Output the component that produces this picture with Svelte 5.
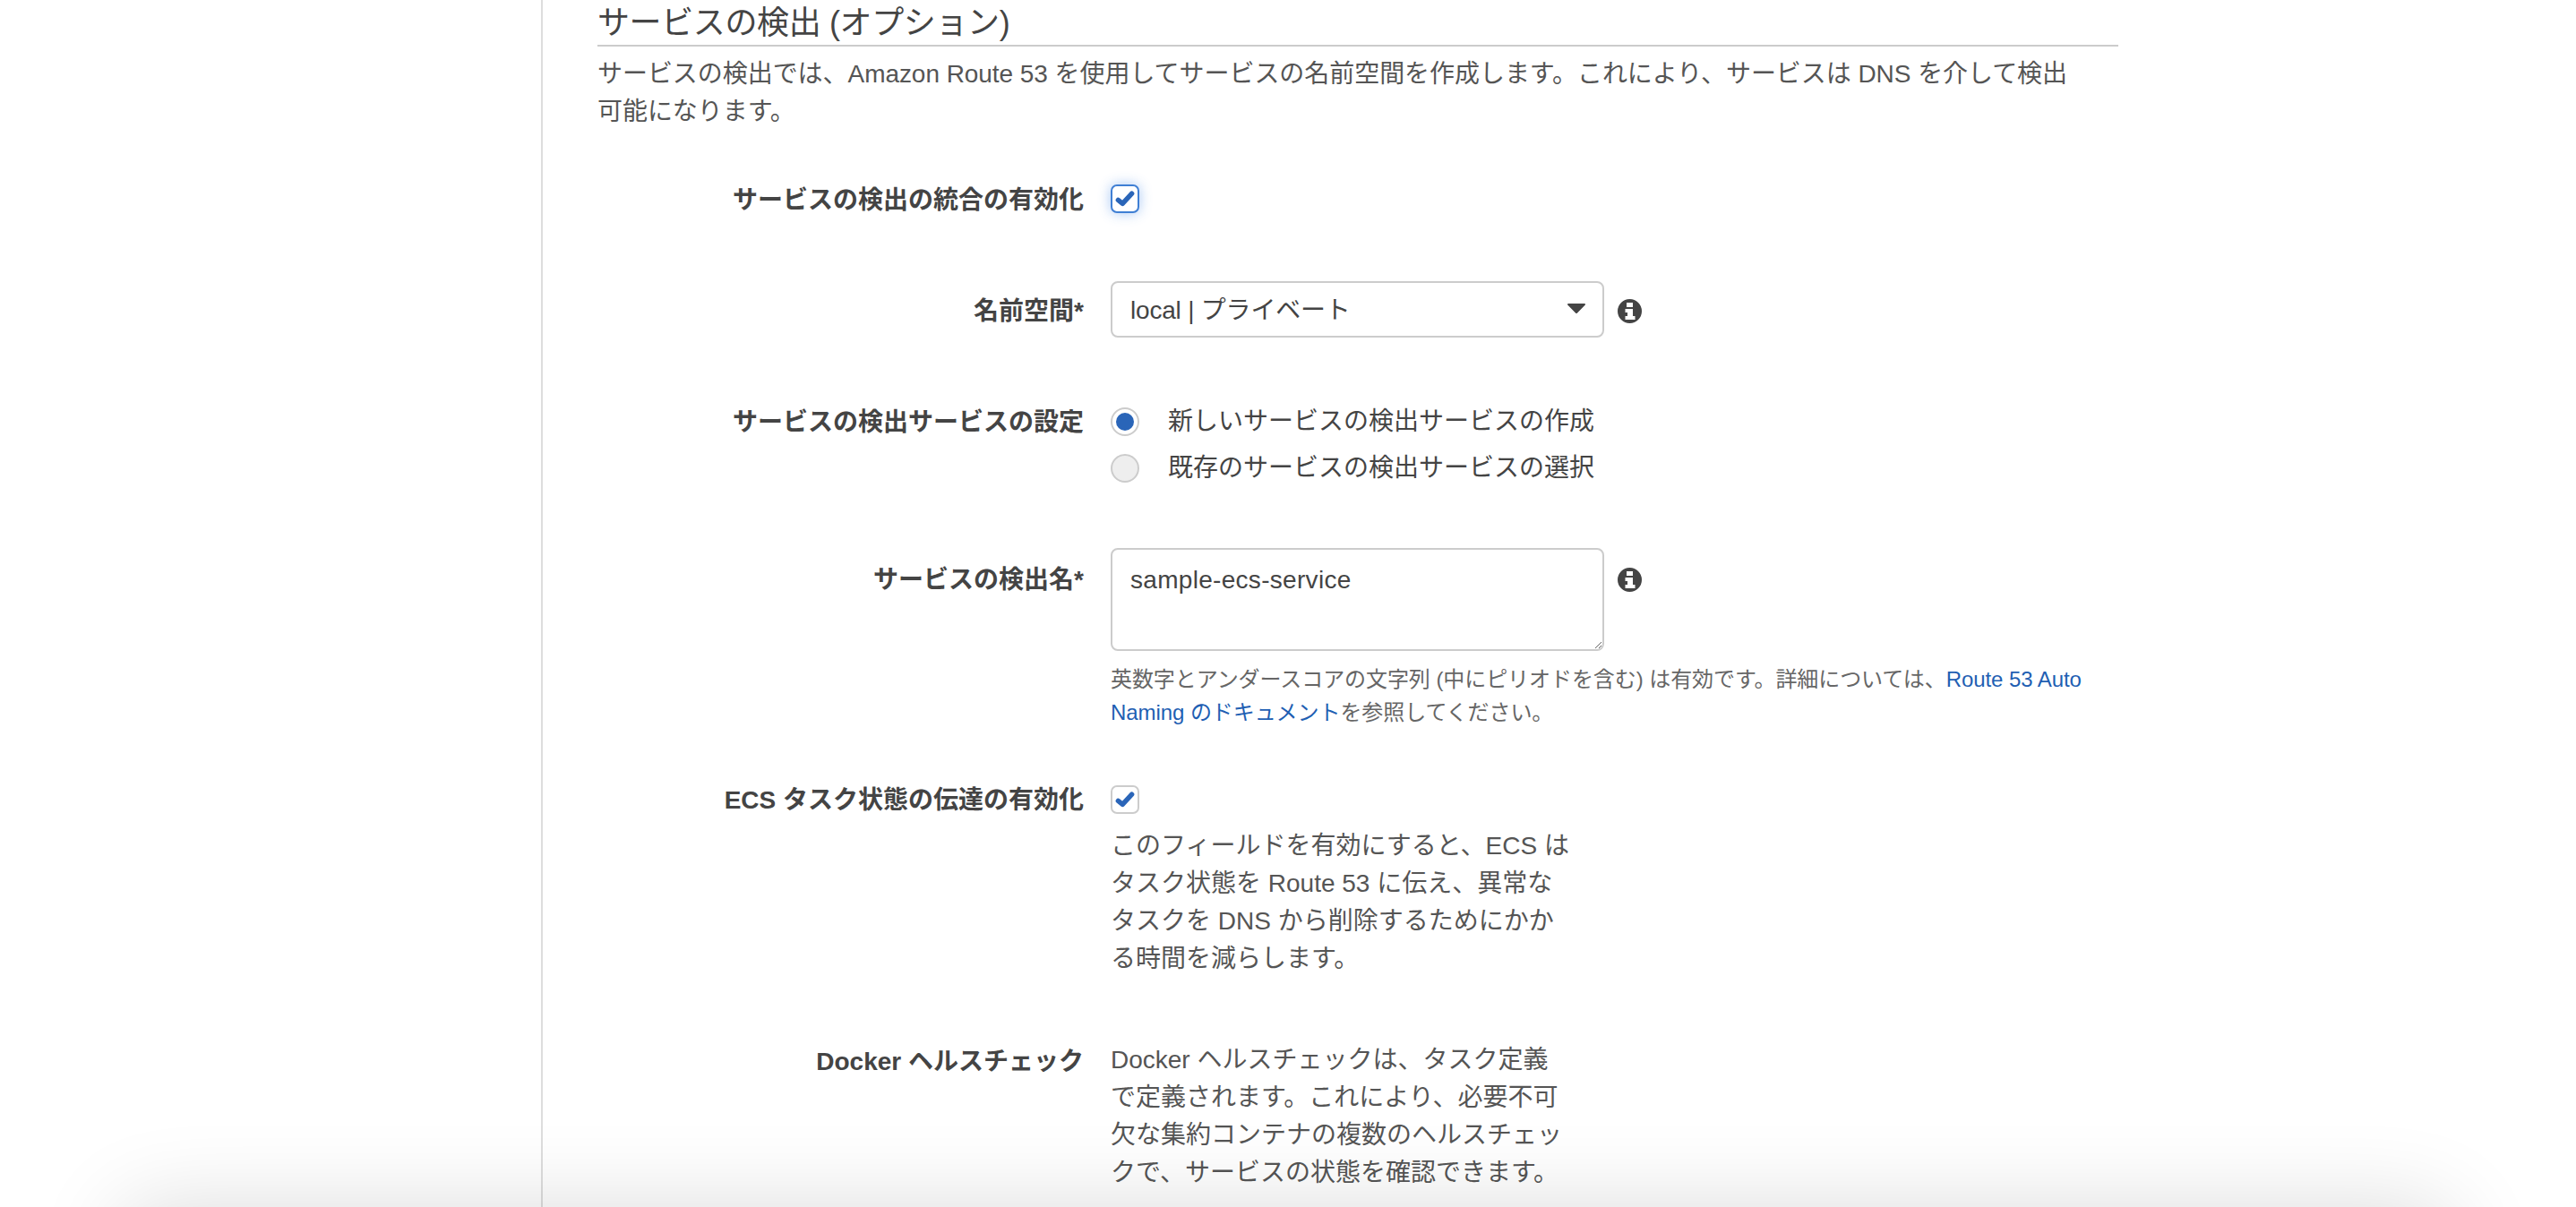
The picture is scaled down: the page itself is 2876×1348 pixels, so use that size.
<script>
  const infoPath = "M13.5 0a13.5 13.5 0 1 0 0 27a13.5 13.5 0 1 0 0-27z M10 4h7v5h-7z M8.500 11h8.500v8h2.500v4h-11v-4h2.500v-4h-2.500z";
  const checkPath = "M3.500 11.500L9 16L20.500 3.500";
</script>

<main class="page">
  <section class="content">
    <h2 class="heading">サービスの検出 (オプション)</h2>
    <p class="desc">サービスの検出では、Amazon Route 53 を使用してサービスの名前空間を作成します。これにより、サービスは DNS を介して検出<br>可能になります。</p>

    <div class="row r1">
      <div class="label">サービスの検出の統合の有効化</div>
      <div class="control">
        <span class="check focus">
          <svg viewBox="0 0 24 20" width="22" height="18"><path d={checkPath} fill="none" stroke="#2a65b8" stroke-width="6" stroke-linecap="round" stroke-linejoin="round"/></svg>
        </span>
      </div>
    </div>

    <div class="row r2">
      <div class="label pad12">名前空間*</div>
      <div class="control">
        <div class="select">
          <span>local | プライベート</span>
          <svg class="arrow" viewBox="0 0 20 11" width="20" height="11"><path d="M1 0h18a1 1 0 0 1 .8 1.600l-8.800 9a1.400 1.400 0 0 1-2 0L.2 1.600A1 1 0 0 1 1 0z" fill="#444"/></svg>
        </div>
      </div>
      <svg class="info" viewBox="0 0 27 27" width="27" height="27"><path d={infoPath} fill="#444" fill-rule="evenodd"/></svg>
    </div>

    <div class="row r3">
      <div class="label">サービスの検出サービスの設定</div>
      <div class="control radios">
        <div class="option"><span class="radio on"><i></i></span>新しいサービスの検出サービスの作成</div>
        <div class="option"><span class="radio"></span>既存のサービスの検出サービスの選択</div>
      </div>
    </div>

    <div class="row r4">
      <div class="label pad14">サービスの検出名*</div>
      <div class="control wide">
        <textarea class="area" readonly>sample-ecs-service</textarea>
        <p class="help">英数字とアンダースコアの文字列 (中にピリオドを含む) は有効です。詳細については、<a href="#top">Route 53 Auto<br>Naming のドキュメント</a>を参照してください。</p>
      </div>
      <svg class="info" viewBox="0 0 27 27" width="27" height="27"><path d={infoPath} fill="#444" fill-rule="evenodd"/></svg>
    </div>

    <div class="row r5">
      <div class="label">ECS タスク状態の伝達の有効化</div>
      <div class="control">
        <span class="check low">
          <svg viewBox="0 0 24 20" width="22" height="18"><path d={checkPath} fill="none" stroke="#2a65b8" stroke-width="6" stroke-linecap="round" stroke-linejoin="round"/></svg>
        </span>
        <p class="body after">このフィールドを有効にすると、ECS は<br>タスク状態を Route 53 に伝え、異常な<br>タスクを DNS から削除するためにかか<br>る時間を減らします。</p>
      </div>
    </div>

    <div class="row r6">
      <div class="label pad1">Docker ヘルスチェック</div>
      <div class="control">
        <p class="body">Docker ヘルスチェックは、タスク定義<br>で定義されます。これにより、必要不可<br>欠な集約コンテナの複数のヘルスチェッ<br>クで、サービスの状態を確認できます。</p>
      </div>
    </div>
  </section>
  <div class="shade"></div>
</main>

<style>
  :global(body) {
    margin: 0;
    background: #fff;
  }
  .page {
    height: 1348px;
    overflow: hidden;
    padding-left: 604px;
    box-sizing: border-box;
    font-family: "Liberation Sans", "Noto Sans CJK JP", sans-serif;
    font-size: 28px;
    color: #444;
  }
  .content {
    width: 1698px;
    height: 100%;
    padding-left: 61px;
    border-left: 2px solid #ddd;
  }
  .heading {
    margin: 0;
    height: 50px;
    line-height: 52px;
    font-size: 36px;
    font-weight: 400;
    letter-spacing: -0.38px;
    border-bottom: 2px solid #ccc;
    white-space: nowrap;
  }
  .desc {
    margin: 10px 0 0;
    line-height: 42px;
    color: #555;
    letter-spacing: -0.05px;
    white-space: nowrap;
  }
  .row {
    display: grid;
    grid-template-columns: 543px 551px auto;
    column-gap: 30px;
    align-items: start;
  }
  .r1 { margin-top: 56px; }
  .r2 { margin-top: 68px; }
  .r3 { margin-top: 73px; }
  .r4 { margin-top: 68px; }
  .r5 { margin-top: 58px; }
  .r6 { margin-top: 71px; }
  .label {
    text-align: right;
    font-weight: 700;
    line-height: 44px;
    white-space: nowrap;
  }
  .pad1 { padding-top: 1px; }
  .pad12 { padding-top: 12px; }
  .pad14 { padding-top: 14px; }
  .check {
    display: flex;
    align-items: center;
    justify-content: center;
    width: 32px;
    height: 32px;
    box-sizing: border-box;
    border: 2px solid #ccc;
    border-radius: 7px;
    background: #fff;
    margin-top: 4px;
  }
  .check.focus {
    border-color: #3f7fd4;
    box-shadow: 0 0 14px rgba(60, 130, 230, 0.45);
  }
  .check.low { margin-top: 5px; }
  .select {
    display: flex;
    align-items: center;
    justify-content: space-between;
    height: 63px;
    box-sizing: border-box;
    padding: 0 20px;
    border: 2px solid #ccc;
    border-radius: 8px;
    background: #fff;
    line-height: 54px;
  }
  .select span { margin-top: 3px; letter-spacing: -0.2px; }
  .arrow { margin-right: -1px; margin-top: -2px; }
  .info { margin: 20px 0 0 -15px; }
  .r4 .info { margin-top: 22px; }
  .radios { display: flex; flex-direction: column; gap: 10px; }
  .option {
    display: flex;
    align-items: center;
    line-height: 42px;
    white-space: nowrap;
    gap: 32px;
  }
  .radio {
    display: flex;
    align-items: center;
    justify-content: center;
    flex: none;
    width: 32px;
    height: 32px;
    box-sizing: border-box;
    border: 2px solid #ccc;
    border-radius: 50%;
    background: #eee;
  }
  .radio.on { background: #fff; }
  .radio i {
    display: block;
    width: 20px;
    height: 20px;
    border-radius: 50%;
    background: #2a65b8;
  }
  .area {
    display: block;
    width: 551px;
    height: 115px;
    box-sizing: border-box;
    margin: 0;
    padding: 13px 20px;
    border: 2px solid #ccc;
    border-radius: 8px;
    outline: none;
    font: inherit;
    line-height: 42px;
    letter-spacing: 0.3px;
    color: #444;
    background: #fff;
    resize: vertical;
  }
  .help {
    margin: 14px 0 0;
    font-size: 24px;
    line-height: 36.5px;
    color: #666;
    letter-spacing: -0.07px;
    white-space: nowrap;
  }
  .help a { color: #1f5fb3; text-decoration: none; }
  .body {
    margin: 0;
    line-height: 42px;
    color: #555;
    white-space: nowrap;
  }
  .after { margin-top: 15px; }
  .shade {
    position: fixed;
    left: 135px;
    right: 138px;
    top: 1348px;
    height: 200px;
    border-radius: 30px;
    box-shadow: 0 0 100px rgba(0, 0, 0, 0.14);
    pointer-events: none;
  }
</style>
